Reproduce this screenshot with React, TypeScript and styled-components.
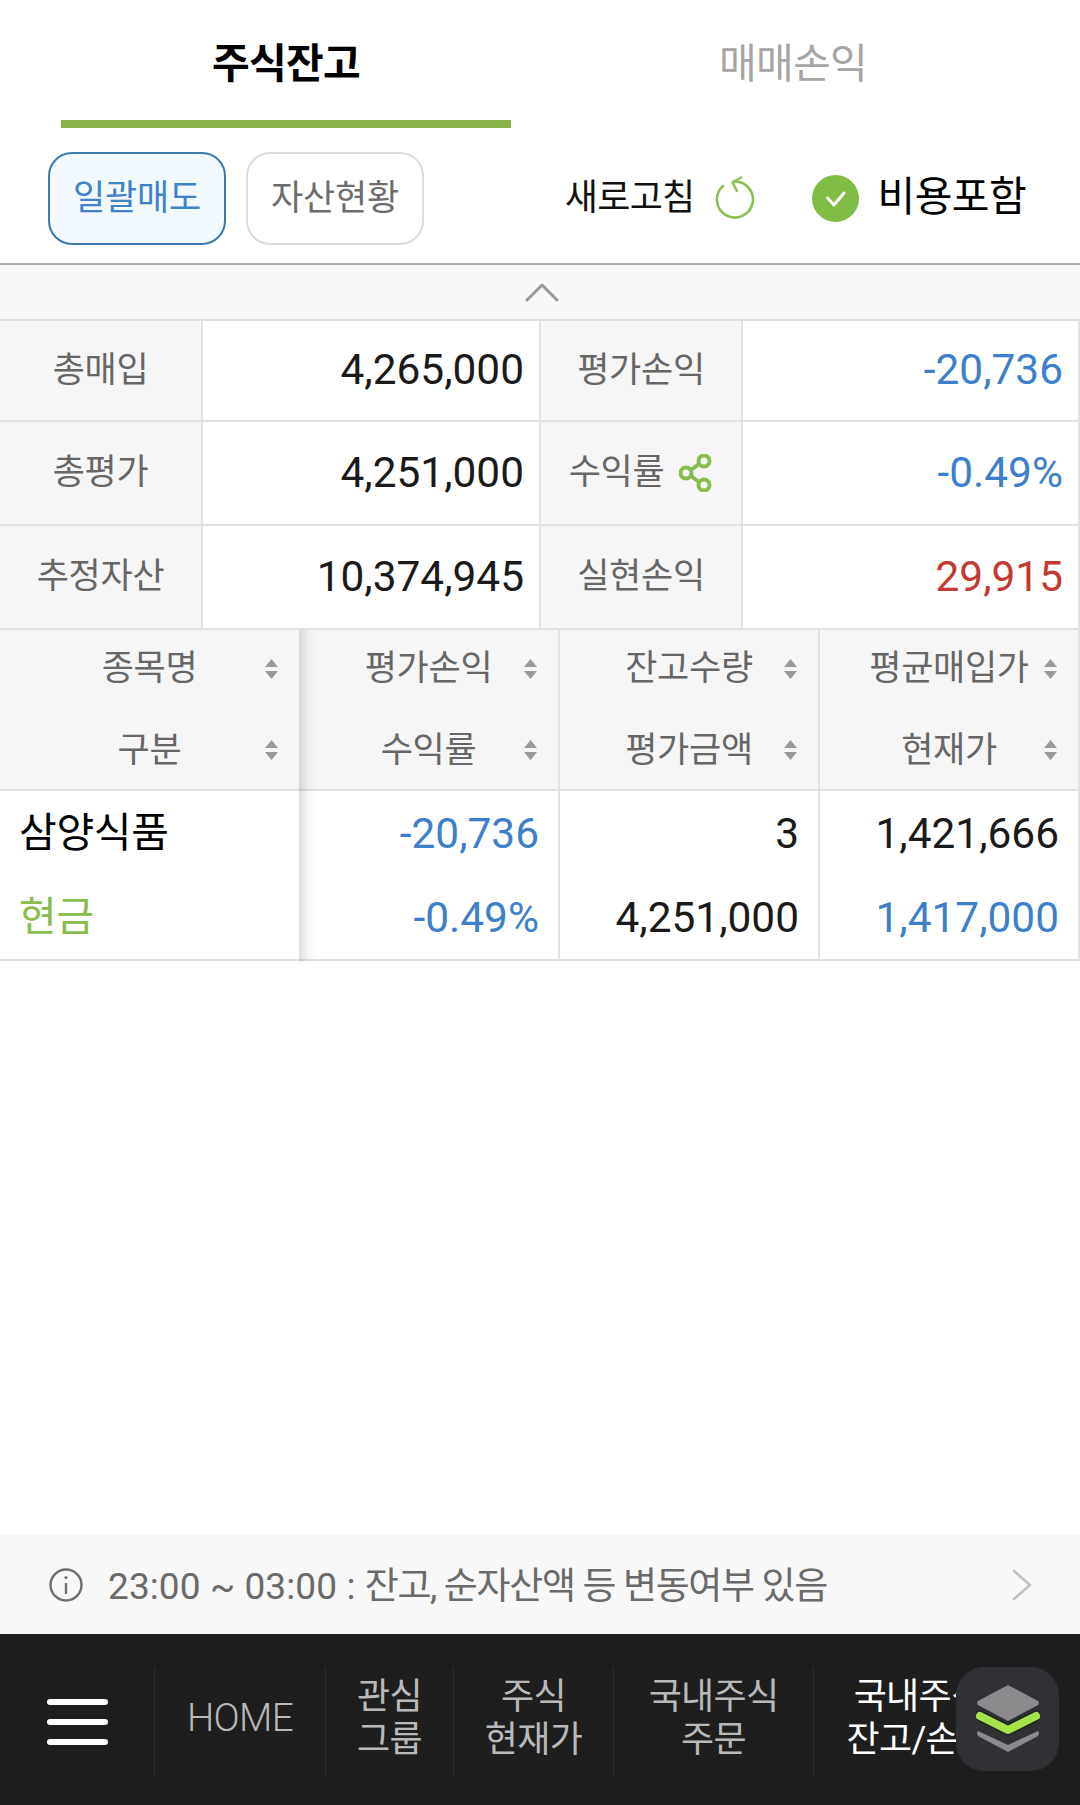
import React from "react";
import styled, { createGlobalStyle, css } from "styled-components";

const Global = createGlobalStyle`
  html, body { margin: 0; padding: 0; background: #fff; }
  * { box-sizing: border-box; }
  body { font-family: Roboto, "Noto Sans CJK KR", sans-serif; }
`;

const Page = styled.div`
  width: 1080px;
  height: 1805px;
  display: flex;
  flex-direction: column;
  overflow: hidden;
  position: relative;
`;

const Tabs = styled.div`
  display: grid;
  grid-template-columns: 450px 450px;
  column-gap: 57px;
  padding-left: 61px;
  height: 128px;
`;

const Tab = styled.div<{ $active?: boolean }>`
  display: flex;
  align-items: center;
  justify-content: center;
  padding-bottom: 0;
  font-size: 41px;
  letter-spacing: -0.7px;
  font-weight: ${(p) => (p.$active ? 700 : 400)};
  color: ${(p) => (p.$active ? "#000" : "#a5a5a5")};
  border-bottom: 8px solid ${(p) => (p.$active ? "#88b44c" : "transparent")};
`;

const Toolbar = styled.div`
  height: 137px;
  display: flex;
  align-items: flex-start;
  padding: 24px 0 0 48px;
  border-bottom: 2px solid #aeaeae;
`;

const Pill = styled.div<{ $active?: boolean }>`
  width: 178px;
  height: 93px;
  margin-right: 20px;
  border-radius: 24px;
  display: flex;
  align-items: center;
  justify-content: center;
  font-size: 35px;
  letter-spacing: -0.2px;
  padding-bottom: 9px;
  color: ${(p) => (p.$active ? "#3f82c8" : "#6d6d6d")};
  background: ${(p) => (p.$active ? "#f1f8fe" : "#fff")};
  border: 2px solid ${(p) => (p.$active ? "#3c78a9" : "#dcdcdc")};
`;

const ToolRight = styled.div`
  margin-left: auto;
  height: 93px;
  display: flex;
  align-items: center;
  padding-right: 54px;
`;

const RefreshLabel = styled.span`
  font-size: 36px;
  letter-spacing: -0.7px;
  color: #111;
  margin-right: 20px;
  padding-bottom: 10px;
`;

const RefreshIcon = styled.svg`
  width: 40px;
  height: 45px;
  margin-right: 57px;
`;

const CheckIcon = styled.svg`
  width: 47px;
  height: 47px;
  margin-right: 19px;
`;

const CostLabel = styled.span`
  font-size: 41px;
  letter-spacing: -0.6px;
  color: #000;
  padding-bottom: 12px;
`;

const Collapse = styled.div`
  height: 56px;
  background: #f8f8f8;
  border-bottom: 2px solid #e0e0e0;
  display: flex;
  align-items: center;
  justify-content: center;
`;

const ChevronUp = styled.svg`
  width: 34px;
  height: 20px;
  margin-left: 4px;
`;

const Summary = styled.div`
  display: grid;
  grid-template-columns: 203px 338px 202px 337px;
  grid-template-rows: 101px 104px 104px;
`;

const SumLabel = styled.div`
  background: #f6f6f6;
  border-right: 2px solid #e2e2e2;
  border-bottom: 2px solid #e2e2e2;
  display: flex;
  align-items: center;
  justify-content: center;
  gap: 15px;
  font-size: 35px;
  letter-spacing: -0.3px;
  color: #666;
  padding-bottom: 9px;
`;

const SumValue = styled.div<{ $color?: string }>`
  border-right: 2px solid #e2e2e2;
  border-bottom: 2px solid #e2e2e2;
  display: flex;
  align-items: center;
  justify-content: flex-end;
  padding-right: 15px;
  padding-bottom: 2px;
  font-size: 42.4px;
  color: ${(p) => p.$color || "#1a1a1a"};
`;

const ShareIcon = styled.svg`
  width: 34px;
  height: 38px;
  margin-top: 8px;
`;

const Table = styled.div`
  display: grid;
  grid-template-columns: 299px 261px 260px 260px;
`;

const frozenEdge = css`
  position: relative;
  z-index: 2;
  border-right: 0;
  &::after {
    content: "";
    position: absolute;
    top: 0;
    bottom: -2px;
    left: 100%;
    width: 20px;
    background: linear-gradient(to right, rgba(0, 0, 0, 0.13), rgba(0, 0, 0, 0.03) 45%, rgba(0, 0, 0, 0));
  }
`;

const HeadCell = styled.div<{ $frozen?: boolean }>`
  height: 161px;
  background: #f6f6f6;
  border-bottom: 2px solid #e2e2e2;
  border-right: 2px solid #e2e2e2;
  display: grid;
  grid-template-rows: 81px 78px;
  ${(p) => p.$frozen && frozenEdge}
`;

const HeadLine = styled.div`
  display: grid;
  grid-template-columns: 1fr auto 1fr;
  align-items: center;
  padding: 0 20px;
  font-size: 35px;
  letter-spacing: -0.3px;
  color: #666;
  &:first-child {
    padding-bottom: 4px;
  }
`;

const HeadText = styled.span`
  grid-column: 2;
  padding-bottom: 8px;
`;

const SortIcon = styled.svg`
  grid-column: 3;
  justify-self: end;
  width: 13px;
  height: 20px;
  margin-right: 1px;
`;

const BodyCell = styled.div<{ $frozen?: boolean }>`
  height: 170px;
  border-bottom: 2px solid #e2e2e2;
  border-right: 2px solid #e2e2e2;
  display: grid;
  grid-template-rows: 84px 84px;
  background: #fff;
  ${(p) => p.$frozen && frozenEdge}
`;

const NumLine = styled.div<{ $color?: string }>`
  display: flex;
  align-items: center;
  justify-content: flex-end;
  padding-right: 19px;
  font-size: 42.4px;
  color: ${(p) => p.$color || "#1a1a1a"};
`;

const NameLine = styled.div<{ $color?: string }>`
  display: flex;
  align-items: center;
  padding-left: 19px;
  padding-bottom: 8px;
  font-size: 41px;
  letter-spacing: -0.3px;
  color: ${(p) => p.$color || "#000"};
`;

const Spacer = styled.div`
  flex: 1;
`;

const Notice = styled.div`
  height: 99px;
  background: #f8f8f8;
  display: flex;
  align-items: center;
  padding: 0 48px 0 49px;
`;

const InfoIcon = styled.svg`
  width: 34px;
  height: 34px;
  margin-right: 25px;
  flex: none;
`;

const NoticeText = styled.span`
  font-size: 37px;
  letter-spacing: -1.35px;
  color: #6a6a6a;
  padding-bottom: 4px;
  flex: 1;
  white-space: nowrap;
`;

const NoticeTime = styled.span`
  letter-spacing: 0.1px;
`;

const ChevronRight = styled.svg`
  width: 20px;
  height: 32px;
  flex: none;
`;

const Nav = styled.div`
  height: 171px;
  background: #1e1e1e;
  display: flex;
  align-items: center;
  padding-top: 5px;
  overflow: hidden;
`;

const Burger = styled.div`
  width: 154px;
  height: 110px;
  flex: none;
  padding-left: 47px;
  display: flex;
  flex-direction: column;
  justify-content: center;
  gap: 14px;
`;

const BurgerBar = styled.span`
  width: 61px;
  height: 6px;
  border-radius: 3px;
  background: #fff;
`;

const NavItem = styled.div<{ $w: number; $active?: boolean }>`
  width: ${(p) => p.$w}px;
  height: 110px;
  flex: none;
  border-left: 1px solid #2f2f2f;
  display: flex;
  align-items: center;
  justify-content: center;
  text-align: center;
  font-size: 36px;
  line-height: 43px;
  letter-spacing: -0.7px;
  padding-bottom: 6px;
  color: ${(p) => (p.$active ? "#fff" : "#b9b9b9")};
  white-space: pre-line;
`;

const Home = styled.span`
  font-family: Roboto, sans-serif;
  font-weight: 300;
  font-size: 38.5px;
  letter-spacing: -0.6px;
  margin-bottom: 4px;
`;

const Fab = styled.div`
  position: absolute;
  left: 956px;
  top: 1667px;
  width: 103px;
  height: 104px;
  border-radius: 28px;
  background: #303135;
  display: flex;
  align-items: center;
  justify-content: center;
`;

const FabIcon = styled.svg`
  width: 64px;
  height: 68px;
`;

const BLUE = "#3d80c9";
const RED = "#c23a36";
const GREEN = "#8abb4e";

const Sort = () => (
  <SortIcon viewBox="0 0 13 20">
    <path d="M6.5 0 L13 8 H0 Z M0 12 H13 L6.5 20 Z" fill="#999" />
  </SortIcon>
);

const Head = ({ a, b, frozen }: { a: string; b: string; frozen?: boolean }) => (
  <HeadCell $frozen={frozen}>
    <HeadLine>
      <HeadText>{a}</HeadText>
      <Sort />
    </HeadLine>
    <HeadLine>
      <HeadText>{b}</HeadText>
      <Sort />
    </HeadLine>
  </HeadCell>
);

export default function App() {
  return (
    <Page>
      <Global />
      <Tabs>
        <Tab $active>주식잔고</Tab>
        <Tab>매매손익</Tab>
      </Tabs>
      <Toolbar>
        <Pill $active>일괄매도</Pill>
        <Pill>자산현황</Pill>
        <ToolRight>
          <RefreshLabel>새로고침</RefreshLabel>
          <RefreshIcon viewBox="0 0 40 45" fill="none" stroke="#8cc152" strokeWidth="2.6" strokeLinecap="round" strokeLinejoin="round">
            <path d="M19 5.5 A18 18 0 1 1 8 10" />
            <path d="M26 1.5 L17.5 6.5 L22 15" />
          </RefreshIcon>
          <CheckIcon viewBox="0 0 47 47">
            <circle cx="23.5" cy="23.5" r="23.5" fill="#80bd45" />
            <path d="M15.5 23 L22 30 L32 18" fill="none" stroke="#fff" strokeWidth="3" strokeLinecap="round" strokeLinejoin="round" />
          </CheckIcon>
          <CostLabel>비용포함</CostLabel>
        </ToolRight>
      </Toolbar>
      <Collapse>
        <ChevronUp viewBox="0 0 34 20" fill="none" stroke="#999" strokeWidth="3" strokeLinecap="round" strokeLinejoin="round">
          <path d="M2 18 L17 3 L32 18" />
        </ChevronUp>
      </Collapse>
      <Summary>
        <SumLabel>총매입</SumLabel>
        <SumValue>4,265,000</SumValue>
        <SumLabel>평가손익</SumLabel>
        <SumValue $color={BLUE}>-20,736</SumValue>
        <SumLabel>총평가</SumLabel>
        <SumValue>4,251,000</SumValue>
        <SumLabel>
          수익률
          <ShareIcon viewBox="0 0 34 38" fill="none" stroke={GREEN} strokeWidth="4">
            <circle cx="25" cy="7" r="5.5" />
            <circle cx="7" cy="19" r="5.5" />
            <circle cx="25" cy="31" r="5.5" />
            <path d="M12 16 L20 10 M12 22 L20 28" />
          </ShareIcon>
        </SumLabel>
        <SumValue $color={BLUE}>-0.49%</SumValue>
        <SumLabel>추정자산</SumLabel>
        <SumValue>10,374,945</SumValue>
        <SumLabel>실현손익</SumLabel>
        <SumValue $color={RED}>29,915</SumValue>
      </Summary>
      <Table>
        <Head a="종목명" b="구분" frozen />
        <Head a="평가손익" b="수익률" />
        <Head a="잔고수량" b="평가금액" />
        <Head a="평균매입가" b="현재가" />
        <BodyCell $frozen>
          <NameLine>삼양식품</NameLine>
          <NameLine $color={GREEN}>현금</NameLine>
        </BodyCell>
        <BodyCell>
          <NumLine $color={BLUE}>-20,736</NumLine>
          <NumLine $color={BLUE}>-0.49%</NumLine>
        </BodyCell>
        <BodyCell>
          <NumLine>3</NumLine>
          <NumLine>4,251,000</NumLine>
        </BodyCell>
        <BodyCell>
          <NumLine>1,421,666</NumLine>
          <NumLine $color={BLUE}>1,417,000</NumLine>
        </BodyCell>
      </Table>
      <Spacer />
      <Notice>
        <InfoIcon viewBox="0 0 34 34" fill="none" stroke="#6e6e6e" strokeWidth="2.4">
          <circle cx="17" cy="17" r="15.5" />
          <path d="M17 15 V26" />
          <circle cx="17" cy="9.5" r="1.6" fill="#6e6e6e" stroke="none" />
        </InfoIcon>
        <NoticeText>
          <NoticeTime>23:00 ~ 03:00 : </NoticeTime>잔고, 순자산액 등 변동여부 있음
        </NoticeText>
        <ChevronRight viewBox="0 0 20 32" fill="none" stroke="#c4c4c4" strokeWidth="2.6" strokeLinecap="round" strokeLinejoin="round">
          <path d="M2 2 L18 16 L2 30" />
        </ChevronRight>
      </Notice>
      <Nav>
        <Burger>
          <BurgerBar />
          <BurgerBar />
          <BurgerBar />
        </Burger>
        <NavItem $w={171}>
          <Home>HOME</Home>
        </NavItem>
        <NavItem $w={128}>{"관심\n그룹"}</NavItem>
        <NavItem $w={160}>{"주식\n현재가"}</NavItem>
        <NavItem $w={200}>{"국내주식\n주문"}</NavItem>
        <NavItem $w={210} $active>{"국내주식\n잔고/손익"}</NavItem>
      </Nav>
      <Fab>
        <FabIcon viewBox="0 0 64 68">
          <path d="M32 0 L62 16 Q64 18 62 20 L32 36 L2 20 Q0 18 2 16 Z" fill="#8b8b8d" />
          <path d="M4 31 L32 45 L60 31" fill="none" stroke="#111" strokeWidth="12" strokeLinecap="round" strokeLinejoin="round" opacity="0.35" />
          <path d="M4 31 L32 45 L60 31" fill="none" stroke="#a6e34a" strokeWidth="8" strokeLinecap="round" strokeLinejoin="round" />
          <path d="M2 46 L32 60 L62 46 Q64 48 62 51 L32 67 L2 51 Q0 48 2 46 Z" fill="#8b8b8d" />
        </FabIcon>
      </Fab>
    </Page>
  );
}
